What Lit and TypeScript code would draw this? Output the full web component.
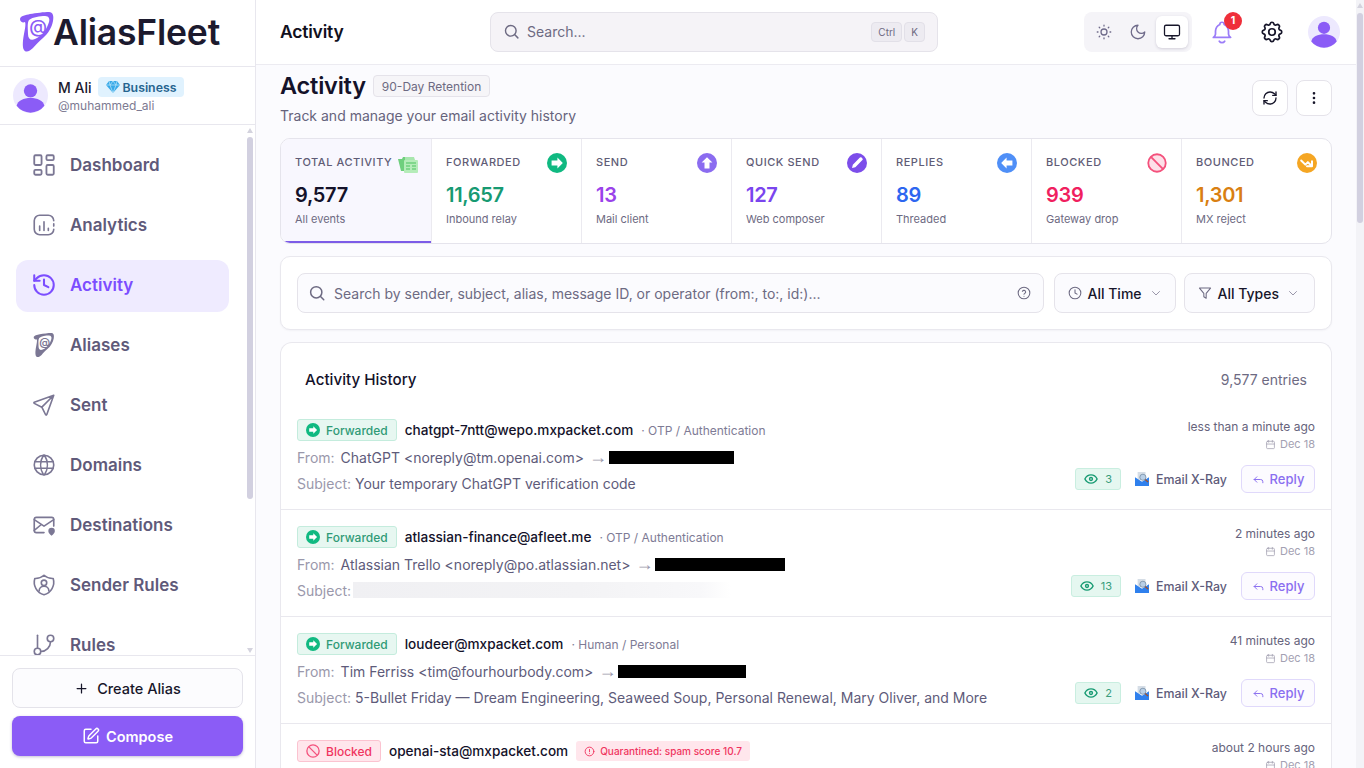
import { LitElement, html, css, svg } from "lit";
import { customElement } from "lit/decorators.js";

const I = (c: unknown, cls = "") =>
  html`<svg class="ic ${cls}" viewBox="0 0 24 24" fill="none" stroke="currentColor" stroke-width="2" stroke-linecap="round" stroke-linejoin="round">${c}</svg>`;

const EAR = "M0 7C0 4 6 3 10 2 16 1 24 0 29 0c4 0 5 4 4 9-1 6-5 13-10 17-4 3-7 7-10 10-3 3-7 5-9 2-2-3-1-11 0-16 1-5 2-10 1-12-2 1-5 0-5-3z";
const EAR_HOLE = "M9 8c4-3 11-4 16-4 4 0 5 3 4 6-2 7-7 14-14 17-4 2-7 0-7-5 0-5-1-11 1-14z";

const P: Record<string, unknown> = {
  dashboard: svg`<g transform="translate(12 12) scale(1.125) translate(-12 -12)"><path d="M5 4h4a1 1 0 0 1 1 1v6a1 1 0 0 1-1 1H5a1 1 0 0 1-1-1V5a1 1 0 0 1 1-1"/><path d="M5 16h4a1 1 0 0 1 1 1v2a1 1 0 0 1-1 1H5a1 1 0 0 1-1-1v-2a1 1 0 0 1 1-1"/><path d="M15 12h4a1 1 0 0 1 1 1v6a1 1 0 0 1-1 1h-4a1 1 0 0 1-1-1v-6a1 1 0 0 1 1-1"/><path d="M15 4h4a1 1 0 0 1 1 1v2a1 1 0 0 1-1 1h-4a1 1 0 0 1-1-1V5a1 1 0 0 1 1-1"/></g>`,
  analytics: svg`<path d="M21 8a5 5 0 0 0-5-5H8a5 5 0 0 0-5 5v8a5 5 0 0 0 5 5h8a5 5 0 0 0 5-5"/><path d="M8 17v-4M12 17V9M16 17v-2M21 11v2"/>`,
  history: svg`<path d="M3 12a9 9 0 1 0 9-9 9.75 9.75 0 0 0-6.74 2.74L3 8"/><path d="M3 3v5h5"/><path d="M12 7v5l4 2"/>`,
  alias: svg`<g transform="translate(2.500 1) scale(.56)" stroke="none"><path d=${EAR} fill="currentColor"/><path d=${EAR_HOLE} fill="#fff"/><text x="18" y="21" text-anchor="middle" font-size="18" font-weight="600" fill="currentColor" font-family="Inter, sans-serif">@</text></g>`,
  sent: svg`<path d="M10 14 21 3M21 3l-6.500 18a.55.55 0 0 1-1 0L10 14l-7-3.500a.55.55 0 0 1 0-1L21 3"/>`,
  globe: svg`<circle cx="12" cy="12" r="9"/><path d="M3.600 9h16.800M3.600 15h16.800M11.500 3a17 17 0 0 0 0 18M12.500 3a17 17 0 0 1 0 18"/>`,
  dest: svg`<path d="M12 19H5a2 2 0 0 1-2-2V7a2 2 0 0 1 2-2h14a2 2 0 0 1 2 2v6"/><path d="m3 7 9 6 9-6M3 17l6-5"/><path d="M19 22c-2-2-3-3-3-4.500a3 3 0 0 1 6 0c0 1.500-1 2.500-3 4.500z" fill="currentColor" stroke="none"/>`,
  shield: svg`<path d="M12 3a12 12 0 0 0 8.500 3A12 12 0 0 1 12 21 12 12 0 0 1 3.500 6 12 12 0 0 0 12 3"/><circle cx="12" cy="10" r="2.500"/><path d="M7.500 17.500a4.500 4.500 0 0 1 9 0"/>`,
  rules: svg`<path d="M6 3v12"/><circle cx="18" cy="6" r="3"/><circle cx="6" cy="18" r="3"/><path d="M18 9a9 9 0 0 1-9 9"/>`,
  search: svg`<circle cx="11" cy="11" r="7.500"/><path d="m21 21-4.300-4.300"/>`,
  sun: svg`<circle cx="12" cy="12" r="4"/><path d="M12 3v1M12 20v1M3 12h1M20 12h1M5.600 5.600l.7.7M17.700 17.700l.7.7M5.600 18.400l.7-.7M17.700 6.300l.7-.7"/>`,
  moon: svg`<path d="M12 3a6 6 0 0 0 9 9 9 9 0 1 1-9-9Z"/>`,
  monitor: svg`<rect x="2" y="3" width="20" height="14" rx="2"/><path d="M8 21h8M12 17v4"/>`,
  bell: svg`<path d="M10 5a2 2 0 1 1 4 0 7 7 0 0 1 4 6v3a4 4 0 0 0 2 3H4a4 4 0 0 0 2-3v-3a7 7 0 0 1 4-6"/><path d="M9.500 20.500a3 3 0 0 0 5 0"/>`,
  gear: svg`<path d="M10.325 4.317c.426-1.756 2.924-1.756 3.350 0a1.724 1.724 0 0 0 2.573 1.066c1.543-.94 3.310.826 2.370 2.370a1.724 1.724 0 0 0 1.065 2.572c1.756.426 1.756 2.924 0 3.350a1.724 1.724 0 0 0-1.066 2.573c.94 1.543-.826 3.310-2.370 2.370a1.724 1.724 0 0 0-2.572 1.065c-.426 1.756-2.924 1.756-3.350 0a1.724 1.724 0 0 0-2.573-1.066c-1.543.94-3.310-.826-2.370-2.370a1.724 1.724 0 0 0-1.065-2.572c-1.756-.426-1.756-2.924 0-3.350a1.724 1.724 0 0 0 1.066-2.573c-.94-1.543.826-3.310 2.370-2.370 1 .608 2.296.07 2.572-1.065z"/><circle cx="12" cy="12" r="3"/>`,
  refresh: svg`<path d="M3 12a9 9 0 0 1 9-9 9.750 9.750 0 0 1 6.740 2.740L21 8"/><path d="M21 3v5h-5"/><path d="M21 12a9 9 0 0 1-9 9 9.750 9.750 0 0 1-6.740-2.740L3 16"/><path d="M8 16H3v5"/>`,
  kebab: svg`<circle cx="12" cy="5" r="1"/><circle cx="12" cy="12" r="1"/><circle cx="12" cy="19" r="1"/>`,
  plus: svg`<path d="M5 12h14M12 5v14"/>`,
  compose: svg`<path d="M12 3H5a2 2 0 0 0-2 2v14a2 2 0 0 0 2 2h14a2 2 0 0 0 2-2v-7"/><path d="M18.375 2.625a1 1 0 0 1 3 3l-9.013 9.014a2 2 0 0 1-.853.505l-2.873.84a.5.5 0 0 1-.62-.62l.84-2.873a2 2 0 0 1 .506-.852z"/>`,
  help: svg`<circle cx="12" cy="12" r="10"/><path d="M9.200 9.200a3 3 0 0 1 5.700 1c0 2-2.900 2.500-2.900 4"/><path d="M12 17.500h.01"/>`,
  clock: svg`<circle cx="12" cy="12" r="10"/><path d="M12 6.500V12l3.500 2"/>`,
  funnel: svg`<path d="M2.500 3.500h19l-7.500 9V21l-4-2.500v-6z"/>`,
  chev: svg`<path d="m5 9 7 7 7-7"/>`,
  eye: svg`<path d="M1.500 12S5 5 12 5s10.500 7 10.500 7-3.500 7-10.500 7S1.500 12 1.500 12z"/><circle cx="12" cy="12" r="2.500"/>`,
  cal: svg`<rect x="3.500" y="5" width="17" height="16" rx="2"/><path d="M16 3v4M8 3v4M3.500 11h17"/>`,
  reply: svg`<path d="M20 18v-2a4 4 0 0 0-4-4H4"/><path d="m9 17-5-5 5-5"/>`,
  alert: svg`<circle cx="12" cy="12" r="9.500"/><path d="M12 7.500V12.500M12 16.500h.01"/>`,
};

const ARROW = svg`<path d="M12.500 5.500 19 12l-6.500 6.500V15H5.500V9h7z" fill="#fff"/>`;
const disc = (color: string, inner: unknown, cls = "stat-ic") =>
  html`<svg class=${cls} viewBox="0 0 24 24"><circle cx="12" cy="12" r="12" fill=${color} />${inner}</svg>`;

const blockedIcon = (cls: string) =>
  html`<svg class=${cls} viewBox="0 0 24 24" fill="#fde0e8" stroke="#f4517c" stroke-width="2.200"><circle cx="12" cy="12" r="10.500"/><path d="M5 5l14 14"/></svg>`;

const statIcons: Record<string, unknown> = {
  total: html`<svg class="stat-ic total" viewBox="0 0 20 19"><path d="M0 5h4l1-2h7v2h-2v12H3z" fill="#6fcf7d"/><path d="M7 3h9l1 3H7z" fill="#a8e6ae"/><rect x="6" y="6" width="14" height="13" rx="1" fill="#b5ecb9"/><path d="M8 9h10M8 12h4M14 12h4M8 15h4M14 15h4" stroke="#6fcf7d" stroke-width="1.500"/></svg>`,
  forwarded: disc("#10b981", ARROW),
  send: disc("#8b6cf0", svg`<g transform="rotate(-90 12 12)">${ARROW}</g>`),
  quick: disc("#7c4dea", svg`<path d="M6 18l1-4L15.500 5.500a1.400 1.400 0 0 1 2 0l1 1a1.400 1.400 0 0 1 0 2L10 17z" fill="#fff"/>`),
  replies: disc("#4f8ff7", svg`<g transform="rotate(180 12 12)">${ARROW}</g>`),
  blocked: blockedIcon("stat-ic"),
  bounced: disc("#f5a623", svg`<path d="M5 9l5 5 3-3 4 4M18 10v6h-6" fill="none" stroke="#fff" stroke-width="2.400" stroke-linecap="round" stroke-linejoin="round"/>`),
};

const NAV = [
  ["Dashboard", "dashboard"],
  ["Analytics", "analytics"],
  ["Activity", "history"],
  ["Aliases", "alias"],
  ["Sent", "sent"],
  ["Domains", "globe"],
  ["Destinations", "dest"],
  ["Sender Rules", "shield"],
  ["Rules", "rules"],
];

const STATS = [
  { k: "total", label: "Total Activity", n: "9,577", sub: "All events", c: "c-ink" },
  { k: "forwarded", label: "Forwarded", n: "11,657", sub: "Inbound relay", c: "c-green" },
  { k: "send", label: "Send", n: "13", sub: "Mail client", c: "c-violet" },
  { k: "quick", label: "Quick Send", n: "127", sub: "Web composer", c: "c-purple" },
  { k: "replies", label: "Replies", n: "89", sub: "Threaded", c: "c-blue" },
  { k: "blocked", label: "Blocked", n: "939", sub: "Gateway drop", c: "c-red" },
  { k: "bounced", label: "Bounced", n: "1,301", sub: "MX reject", c: "c-amber" },
];

const ROWS = [
  { alias: "chatgpt-7ntt@wepo.mxpacket.com", cat: "OTP / Authentication", from: "ChatGPT <noreply@tm.openai.com>", bar: 125, subject: "Your temporary ChatGPT verification code", time: "less than a minute ago", views: 3 },
  { alias: "atlassian-finance@afleet.me", cat: "OTP / Authentication", from: "Atlassian Trello <noreply@po.atlassian.net>", bar: 130, subject: "", time: "2 minutes ago", views: 13 },
  { alias: "loudeer@mxpacket.com", cat: "Human / Personal", from: "Tim Ferriss <tim@fourhourbody.com>", bar: 128, subject: "5-Bullet Friday — Dream Engineering, Seaweed Soup, Personal Renewal, Mary Oliver, and More", time: "41 minutes ago", views: 2 },
];

const avatar = (cls: string) =>
  html`<svg class=${cls} viewBox="0 0 34 34"><circle cx="17" cy="17" r="17" fill="#ede9fe"/><circle cx="17" cy="12.500" r="6.500" fill="#8b5cf6"/><path d="M3.500 27c1-5 7-7.500 13.500-7.500S29.500 22 30.500 27a17 17 0 0 1-27 0z" fill="#8b5cf6"/></svg>`;

@customElement("app-root")
export class AppRoot extends LitElement {
  static styles = css`
    :host { display: flex; width: 100vw; height: 100vh; overflow: hidden; background: #fff; color: #11101d;
      font-family: Inter, "Liberation Sans", sans-serif; font-size: 14px; }
    * { box-sizing: border-box; }
    .ic { display: block; flex: none; width: 18px; height: 18px; }

    .side { width: 256px; flex: none; display: flex; flex-direction: column; border-right: 1px solid #e8e7ee; height: 100%; }
    .logo { height: 67px; flex: none; border-bottom: 1px solid #e8e7ee; display: flex; align-items: center; padding: 0 0 1px 20px; }
    .logo svg { width: 34px; height: 41px; flex: none; }
    .logo span { font-size: 35.500px; font-weight: 600; color: #1c1a2e; letter-spacing: -0.2px; margin-left: -1px; line-height: 40px; }
    .user { height: 58px; flex: none; border-bottom: 1px solid #e8e7ee; display: flex; align-items: center; padding: 0 0 0 13px; gap: 10px; }
    .user-av { width: 35px; height: 35px; flex: none; }
    .user-top { display: flex; align-items: center; gap: 6px; height: 20px; }
    .user-name { font-size: 14px; font-weight: 500; color: #1c1a2e; }
    .plan { display: flex; align-items: center; gap: 3px; height: 20px; padding: 0 8px; border-radius: 4px; background: #e0f2fe; color: #27648f; font-size: 12.300px; font-weight: 600; }
    .plan svg { width: 14px; height: 12px; }
    .handle { font-size: 12px; color: #7d7a92; line-height: 16px; margin-top: 1px; }
    .nav-wrap { flex: 1; min-height: 0; display: flex; overflow: hidden; }
    .nav { flex: 1; padding: 15px 16px 0; display: flex; flex-direction: column; gap: 8px; min-width: 0; }
    .item { height: 52px; flex: none; display: flex; align-items: center; gap: 13px; padding: 0 0 2px 15px; border-radius: 12px; font-size: 17px; font-weight: 600; color: #5f5a7a; }
    .item .ic { width: 26px; height: 26px; color: #7b7794; stroke-width: 1.500; }
    .item.on { background: #efebff; color: #7c4dff; }
    .item.on .ic { color: #7c4dff; stroke-width: 1.900; }
    .sb-side { width: 10px; flex: none; display: flex; flex-direction: column; align-items: flex-start; padding: 3px 0 2px 2px; }
    .sb-arrow-up, .sb-arrow-down { width: 6px; height: 5px; flex: none; }
    .sb-arrow-up { background: #d4d3de; clip-path: polygon(50% 0, 100% 100%, 0 100%); }
    .sb-arrow-down { background: #d4d3de; clip-path: polygon(0 0, 100% 0, 50% 100%); margin-top: auto; }
    .sb-side .thumb { width: 6px; height: 362px; margin-top: 4px; background: #d2d0e0; border-radius: 3px; flex: none; }
    .foot { flex: none; height: 113px; border-top: 1px solid #e8e7ee; padding: 12px 12px; display: flex; flex-direction: column; gap: 8px; background: #fff; }
    .btn-create, .btn-compose { height: 40px; display: flex; align-items: center; justify-content: center; gap: 8px; border-radius: 8px; font-size: 14.500px; }
    .btn-create { border: 1px solid #e4e3ea; background: #fcfcfe; font-weight: 500; color: #17162a; }
    .btn-create .ic { width: 15px; height: 15px; }
    .btn-compose { background: #8b5cf6; color: #fff; font-weight: 600; box-shadow: 0 1px 3px rgba(60, 40, 120, .3); gap: 6px; }
    .btn-compose .ic { width: 18px; height: 18px; }

    .center { flex: 1; min-width: 0; display: flex; flex-direction: column; height: 100%; }
    .top { height: 65px; flex: none; border-bottom: 1px solid #ecebf1; display: flex; align-items: center; padding: 0 16px 1px 24px; background: #fff; }
    .top-title { width: 210px; flex: none; font-size: 17.500px; font-weight: 600; letter-spacing: -0.2px; }
    .top-search { width: 448px; height: 40px; flex: none; display: flex; align-items: center; gap: 7px; padding: 0 12px 0 12px; background: #f5f3f7; border: 1px solid #e5e3ea; border-radius: 8px; color: #6d6a82; }
    .top-search .ic { width: 17px; height: 17px; }
    .top-search span.ph { flex: 1; font-size: 14px; }
    .kbd { height: 20px; padding: 0 6px; display: flex; align-items: center; font-size: 10px; background: #edebf1; border: 1px solid #e2e0e8; border-radius: 4px; color: #6d6a82; }
    .kbds { display: flex; gap: 2px; }
    .theme { margin-left: auto; display: flex; gap: 2px; padding: 4px; background: #f5f4f8; border-radius: 8px; }
    .theme div { width: 32px; height: 32px; border-radius: 6px; display: flex; align-items: center; justify-content: center; color: #6e6a8a; }
    .theme .ic { width: 18px; height: 18px; stroke-width: 1.700; }
    .theme .on { background: #fff; color: #17162a; box-shadow: 0 1px 3px rgba(30, 20, 60, .16); }
    .tbtn { position: relative; width: 36px; height: 36px; flex: none; display: flex; align-items: center; justify-content: center; }
    .tbtn .ic { width: 26px; height: 26px; stroke-width: 1.600; }
    .bell { margin-left: 12px; color: #9b7cf8; }
    .gear { margin-left: 14px; color: #17162a; }
    .notif { position: absolute; top: -2px; right: -2px; width: 18px; height: 18px; border-radius: 50%; background: #ef2f3a; color: #fff; font-size: 10.500px; font-weight: 700; display: flex; align-items: center; justify-content: center; }
    .top-av { width: 32px; height: 32px; margin-left: 18px; flex: none; }

    .body { flex: 1; min-height: 0; display: flex; }
    .page { flex: 1; min-width: 0; background: #fbfbfe; padding: 6px 24px 0; overflow: hidden; }
    .scroll-col { width: 8px; flex: none; display: flex; flex-direction: column; background: #f3f3f7; padding: 2px 1px 0; height: 100%; }
    .scroll-col .sb-arrow-up { margin-top: 1px; }
    .scroll-col .thumb { height: 210px; margin-top: 5px; flex: none; background: #d2d0e0; border-radius: 3px; }

    .head { display: flex; align-items: center; justify-content: space-between; height: 55px; margin-bottom: 12px; }
    .title-row { display: flex; align-items: center; gap: 7px; height: 30px; margin-bottom: 5px; }
    h1 { margin: 0; font-size: 23.500px; font-weight: 600; letter-spacing: -0.2px; line-height: 30px; color: #14122a; }
    .ret { height: 22px; padding: 0 8px; display: flex; align-items: center; background: #f6f5f8; border: 1px solid #e5e3ea; border-radius: 4px; font-size: 12px; color: #6d6a82; }
    .sub { font-size: 14px; line-height: 20px; color: #66637c; }
    .head-btns { display: flex; gap: 8px; margin-top: -2px; }
    .hbtn { width: 36px; height: 36px; background: #fff; border: 1px solid #e5e3ea; border-radius: 8px; display: flex; align-items: center; justify-content: center; color: #17162a; }
    .hbtn .ic { width: 16px; height: 16px; }

    .stats { display: flex; height: 106px; border: 1px solid #e5e4ec; border-radius: 10px; background: #fff; overflow: hidden; margin-bottom: 12px; }
    .stat { flex: 0 0 150px; min-width: 0; padding: 14px 14px 0; border-right: 1px solid #ebeaf0; }
    .stat.on { flex-basis: 151px; background: #f8f7fe; box-shadow: inset 0 -2px 0 #7c5ce7; }
    .stat:last-child { border-right: none; flex: 1; }
    .stat-top { display: flex; align-items: center; justify-content: space-between; height: 20px; }
    .stat-label { font-size: 11px; font-weight: 500; letter-spacing: .55px; text-transform: uppercase; color: #5f5c76; white-space: nowrap; padding-bottom: 2px; }
    .stat-ic { width: 20px; height: 20px; flex: none; }
    .stat-ic.total { width: 20px; height: 19px; margin-right: -1px; }
    .stat-n { font-size: 20px; font-weight: 600; line-height: 28px; margin-top: 8px; letter-spacing: -0.3px; }
    .stat-sub { font-size: 11px; line-height: 16px; margin-top: 2px; color: #6d6a82; }
    .c-ink { color: #14122a; } .c-green { color: #179a72; } .c-violet { color: #9a42ea; } .c-purple { color: #7a45ee; }
    .c-blue { color: #2d66f0; } .c-red { color: #f01f5f; } .c-amber { color: #d97f12; }

    .filters { display: flex; align-items: center; height: 74px; padding: 0 16px; background: #fff; border: 1px solid #e9e8ee; border-radius: 10px; box-shadow: 0 1px 2px rgba(30, 20, 60, .04); margin-bottom: 12px; }
    .fsearch { flex: 1; min-width: 0; height: 40px; display: flex; align-items: center; gap: 8px; padding: 0 12px 0 10px; background: #fbfbfe; border: 1px solid #e5e3ea; border-radius: 8px; color: #6d6a82; margin-right: 10px; }
    .fsearch .ic { width: 18px; height: 18px; }
    .fsearch .ph { flex: 1; font-size: 14px; white-space: nowrap; }
    .fsearch .ic.q { width: 14px; height: 14px; stroke-width: 1.800; }
    .sel { height: 40px; display: flex; align-items: center; gap: 6px; padding: 0 13px; background: #fbfbfe; border: 1px solid #e5e3ea; border-radius: 8px; font-size: 14px; font-weight: 500; color: #17162a; white-space: nowrap; }
    .sel + .sel { margin-left: 8px; padding-right: 15px; }
    .sel .ic { width: 14px; height: 14px; color: #6d6a82; stroke-width: 1.800; }
    .sel .chev { width: 12px; height: 12px; margin-left: 2px; color: #8e8ba0; }

    .list { background: #fff; border: 1px solid #e9e8ee; border-radius: 12px 12px 0 0; border-bottom: none; }
    .list-head { display: flex; align-items: center; justify-content: space-between; padding: 24px 24px 12px; height: 60px; }
    .list-title { font-size: 15.200px; font-weight: 500; color: #14122a; }
    .list-count { font-size: 14px; color: #6d6a82; }
    .row { display: flex; justify-content: space-between; height: 107px; padding: 16px 16px 16px; border-bottom: 1px solid #e9e8ee; }
    .row-left { min-width: 0; }
    .line1 { display: flex; align-items: center; height: 22px; }
    .badge { height: 22px; display: flex; align-items: center; gap: 6px; padding: 0 8px; border-radius: 3px; font-size: 12px; font-weight: 500; flex: none; margin-right: 8px; }
    .badge svg { width: 14px; height: 14px; flex: none; }
    .b-fwd { background: #e7f7f1; border: 1px solid #c4ecdd; color: #2f9a76; }
    .b-blk { background: #ffe6ec; border: 1px solid #fbc3d0; color: #f0355f; }
    .alias { font-size: 13.600px; font-weight: 500; color: #14122a; white-space: nowrap; }
    .cat { margin-left: 8px; font-size: 12px; color: #7e7b95; white-space: nowrap; }
    .quar { margin-left: 8px; height: 20px; width: 174px; flex: none; display: flex; align-items: center; gap: 5px; padding: 0 8px; background: #ffe6ec; border-radius: 3px; font-size: 10px; font-weight: 500; color: #f0355f; white-space: nowrap; }
    .quar .ic { width: 11px; height: 11px; }
    .line2 { display: flex; align-items: center; gap: 6px; height: 20px; margin-top: 6px; font-size: 14px; color: #5e5b7a; white-space: nowrap; }
    .line2.subj { gap: 4px; }
    .lab { color: #9a98ab; }
    .arrow { color: #9a98ab; font-family: "Liberation Sans", sans-serif; font-size: 18px; margin: 0 -1px; }
    .redact { display: block; height: 13px; background: #000; flex: none; margin-left: -3px; }
    .blur { display: block; width: 378px; height: 16px; margin-left: -2px; flex: none; background: linear-gradient(90deg, #f0f0f3, #f3f3f5 60%, #f8f8fa 92%, #fff); }
    .row-right { display: flex; flex-direction: column; align-items: flex-end; flex: none; }
    .time { font-size: 12px; line-height: 14px; margin-top: 1px; color: #66637c; }
    .date { display: flex; align-items: center; gap: 4px; font-size: 11px; line-height: 14px; margin-top: 3px; color: #a3a1b2; }
    .date .ic { width: 11px; height: 11px; stroke-width: 1.700; }
    .actions { margin-top: auto; display: flex; align-items: center; }
    .views { height: 22px; display: flex; align-items: center; gap: 7px; padding: 0 8px; background: #e5f7f0; border: 1px solid #c9eee0; border-radius: 3px; font-size: 11px; color: #3a9d7c; margin-right: 14px; }
    .views .ic { width: 14px; height: 14px; color: #179a72; stroke-width: 2.400; }
    .xray { display: flex; align-items: center; gap: 7px; font-size: 12.400px; font-weight: 500; color: #5e5b7a; margin-right: 14px; }
    .xray svg { width: 14px; height: 14px; }
    .reply { width: 74px; height: 28px; display: flex; align-items: center; justify-content: center; gap: 5px; background: #fcfbff; border: 1px solid #e0d9fb; border-radius: 6px; font-size: 13px; font-weight: 500; color: #8a6ff0; }
    .reply .ic { width: 13px; height: 13px; stroke-width: 1.800; }
  `;

  render() {
    return html`
      <aside class="side">
        <div class="logo">
          <svg viewBox="0 0 34 41">
            <path d=${EAR} fill="#8b5cf6"/>
            <path d=${EAR_HOLE} fill="#fff"/>
            <text x="18" y="21" text-anchor="middle" font-size="18" font-weight="500" fill="#8b5cf6" font-family="Inter, sans-serif">@</text>
          </svg>
          <span>AliasFleet</span>
        </div>
        <div class="user">
          ${avatar("user-av")}
          <div>
            <div class="user-top">
              <span class="user-name">M Ali</span>
              <span class="plan"><svg viewBox="0 0 14 12"><path d="M3 0h8l3 4-7 8-7-8z" fill="#38a9e8"/><path d="M0 4h14M4 4l3 8 3-8M3 0l1 4 3-4 3 4 1-4" fill="none" stroke="#bfe6fa" stroke-width=".7"/></svg>Business</span>
            </div>
            <div class="handle">@muhammed_ali</div>
          </div>
        </div>
        <div class="nav-wrap">
          <nav class="nav">
            ${NAV.map(([n, k]) => html`<div class="item ${n === "Activity" ? "on" : ""}">${I(P[k])}<span>${n}</span></div>`)}
          </nav>
          <div class="sb-side"><div class="sb-arrow-up"></div><div class="thumb"></div><div class="sb-arrow-down"></div></div>
        </div>
        <div class="foot">
          <div class="btn-create">${I(P.plus)}Create Alias</div>
          <div class="btn-compose">${I(P.compose)}Compose</div>
        </div>
      </aside>
      <div class="center">
        <header class="top">
          <div class="top-title">Activity</div>
          <div class="top-search">${I(P.search)}<span class="ph">Search...</span><div class="kbds"><span class="kbd">Ctrl</span><span class="kbd">K</span></div></div>
          <div class="theme"><div>${I(P.sun)}</div><div>${I(P.moon)}</div><div class="on">${I(P.monitor)}</div></div>
          <div class="tbtn bell">${I(P.bell)}<span class="notif">1</span></div>
          <div class="tbtn gear">${I(P.gear)}</div>
          ${avatar("top-av")}
        </header>
        <div class="body">
          <main class="page">
            <div class="head">
              <div>
                <div class="title-row"><h1>Activity</h1><span class="ret">90-Day Retention</span></div>
                <div class="sub">Track and manage your email activity history</div>
              </div>
              <div class="head-btns"><div class="hbtn">${I(P.refresh)}</div><div class="hbtn">${I(P.kebab)}</div></div>
            </div>
            <section class="stats">
              ${STATS.map((s, i) => html`<div class="stat ${i === 0 ? "on" : ""}">
                <div class="stat-top"><span class="stat-label">${s.label}</span>${statIcons[s.k]}</div>
                <div class="stat-n ${s.c}">${s.n}</div>
                <div class="stat-sub">${s.sub}</div>
              </div>`)}
            </section>
            <section class="filters">
              <div class="fsearch">${I(P.search)}<span class="ph">Search by sender, subject, alias, message ID, or operator (from:, to:, id:)...</span>${I(P.help, "q")}</div>
              <div class="sel">${I(P.clock)}All Time${I(P.chev, "chev")}</div>
              <div class="sel">${I(P.funnel)}All Types${I(P.chev, "chev")}</div>
            </section>
            <section class="list">
              <div class="list-head"><span class="list-title">Activity History</span><span class="list-count">9,577 entries</span></div>
              ${ROWS.map((r) => html`<div class="row">
                <div class="row-left">
                  <div class="line1">
                    <span class="badge b-fwd">${disc("#10b981", ARROW, "")}Forwarded</span>
                    <span class="alias">${r.alias}</span><span class="cat">· ${r.cat}</span>
                  </div>
                  <div class="line2"><span class="lab">From:</span><span>${r.from}</span><span class="arrow">→</span><span class="redact" style="width:${r.bar}px"></span></div>
                  <div class="line2 subj"><span class="lab">Subject:</span>${r.subject ? html`<span>${r.subject}</span>` : html`<span class="blur"></span>`}</div>
                </div>
                <div class="row-right">
                  <div class="time">${r.time}</div>
                  <div class="date">${I(P.cal)}Dec 18</div>
                  <div class="actions">
                    <span class="views">${I(P.eye)}${r.views}</span>
                    <span class="xray"><svg viewBox="0 0 16 16"><rect x="3" y="0" width="9" height="9" fill="#d5dde6"/><path d="M0 6l8 5 8-5v10H0z" fill="#2f80ed"/><circle cx="9" cy="6" r="3.500" fill="#b9cfe6" stroke="#7d93aa"/><path d="M11.500 8.500l3.500 3" stroke="#a0522d" stroke-width="1.500"/></svg>Email X-Ray</span>
                    <span class="reply">${I(P.reply)}Reply</span>
                  </div>
                </div>
              </div>`)}
              <div class="row">
                <div class="row-left">
                  <div class="line1">
                    <span class="badge b-blk">${blockedIcon("")}Blocked</span>
                    <span class="alias">openai-sta@mxpacket.com</span>
                    <span class="quar">${I(P.alert)}Quarantined: spam score 10.7</span>
                  </div>
                </div>
                <div class="row-right">
                  <div class="time">about 2 hours ago</div>
                  <div class="date">${I(P.cal)}Dec 18</div>
                </div>
              </div>
            </section>
          </main>
        </div>
      </div>
      <div class="scroll-col"><div class="sb-arrow-up"></div><div class="thumb"></div></div>
    `;
  }
}
